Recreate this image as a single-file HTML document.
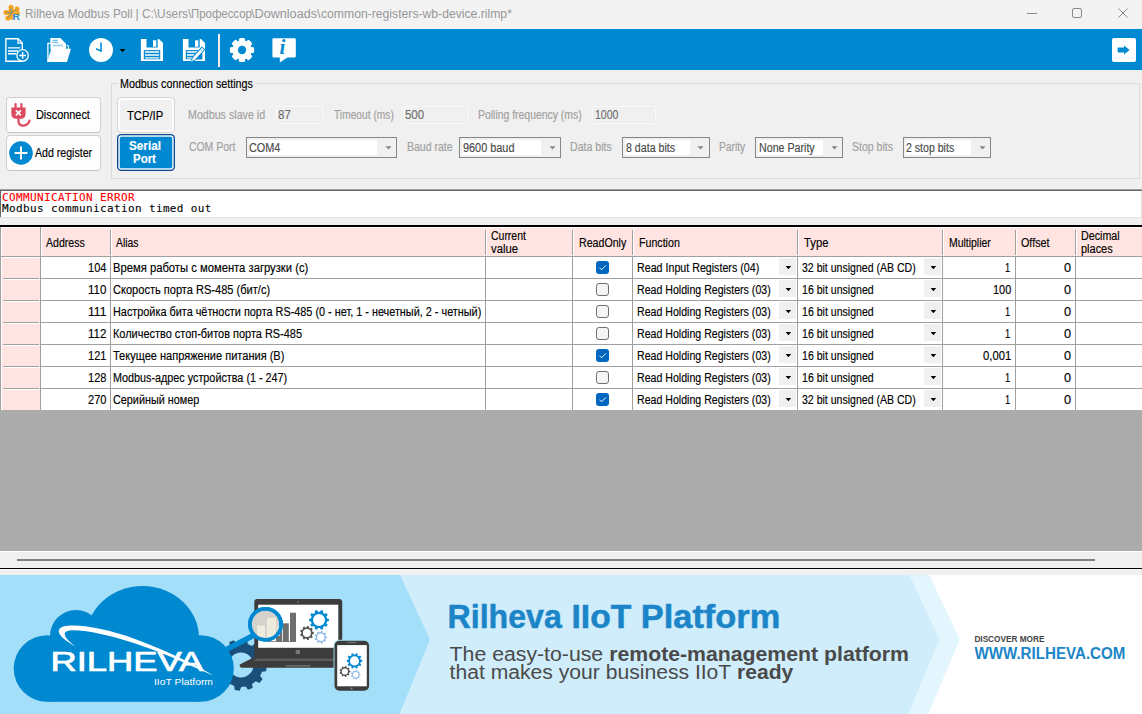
<!DOCTYPE html>
<html lang="en">
<head>
<meta charset="utf-8">
<title>Rilheva Modbus Poll</title>
<style>
*{box-sizing:border-box;margin:0;padding:0}
html,body{width:1142px;height:714px;overflow:hidden;background:#f0f0f0}
body{position:relative;font-family:"Liberation Sans",sans-serif;font-size:12px;color:#000}
.a{position:absolute}
.t{position:absolute;white-space:nowrap;line-height:13px;font-size:12px;transform-origin:0 50%;-webkit-text-stroke:0.15px currentColor}
#title{left:0;top:0;width:1142px;height:29px;background:#f3f3f3}
#tool{left:0;top:29px;width:1142px;height:41px;background:#0088d1}
.btn{background:#fdfdfd;border:1px solid #d0d0d0;border-bottom-color:#c4c4c4;border-radius:4px}
.inp{background:#f0f0f0;border:1px solid #fbfbfb;height:18px;border-radius:2px;box-shadow:inset 0 0 0 1px #ececec}
.combo{background:#f0f0f0;border:1px solid #868686;height:21px;top:137px}
.combo i{position:absolute;left:2px;top:2px;height:15px;background:#fff}
.combo svg{position:absolute;top:8px}
#msg{left:0;top:189px;width:1142px;height:29px;background:#fff;border-top:1px solid #a0a0a0;border-bottom:1px solid #e3e3e3;border-right:1px solid #e3e3e3}
#msg:before{content:"";position:absolute;left:0;top:0;width:1142px;height:1px;background:#696969}
#msg:after{content:"";position:absolute;left:0;top:0;width:1px;height:27px;background:#696969}
.m{position:absolute;left:1.6px;transform-origin:0 50%;transform:scaleX(1.06);white-space:pre;font-family:"DejaVu Sans Mono","Liberation Mono",monospace;font-size:10.4px;line-height:12px;letter-spacing:0.343px;-webkit-text-stroke:0.1px currentColor}
#grid{left:0;top:225px;width:1142px;height:185px;background:#fff;border-top:2px solid #000}
#grid .h{position:absolute;left:2px;top:1px;width:1140px;height:28px;background:#ffe4e1}
.vl{position:absolute;width:1px;background:#a0a0a0}
.hl{position:absolute;height:1px;background:#a0a0a0;left:0}
.rh{position:absolute;left:2px;width:38px;height:22px;background:#ffe4e1}
.rh:before{content:"";position:absolute;left:1px;right:1px;top:0;height:1px;background:#fff}
.rh:after{content:"";position:absolute;left:1px;right:1px;bottom:0;height:1px;background:#a0a0a0}
.dd{position:absolute;width:17px;height:17px;background:#f0f0f0}
.dd:after{content:"";position:absolute;left:6.4px;top:7.8px;width:6px;height:3.5px;background:#000;clip-path:polygon(0 0,100% 0,50% 100%)}
.cb{position:absolute;left:596px;width:13px;height:13px;border-radius:3px}
.cb.on{background:#0067c0}
.cb.off{background:#f5f5f5;border:1px solid #707070}
#gray{left:0;top:410px;width:1142px;height:141px;background:#ababab}
#hs{left:0;top:551px;width:1142px;height:24px;background:#f0f0f0}
#banner{left:0;top:575px;width:1142px;height:139px;background:#fff;overflow:hidden}
</style>
</head>
<body>
<div id="title" class="a">
<svg class="a" style="left:3px;top:4px" width="19" height="18" viewBox="0 0 19 18">
<g fill="#f6a21e"><circle cx="8" cy="3.2" r="2.5"/><circle cx="14" cy="5" r="2.5"/><circle cx="3" cy="8.4" r="2.5"/><circle cx="5" cy="14" r="2.6"/><circle cx="14.6" cy="9.2" r="2.3"/><circle cx="9.4" cy="13.4" r="2.4"/><circle cx="8.6" cy="8.6" r="4.2"/></g>
<g stroke="#3f8fa8" stroke-width="0.7" fill="none"><path d="M8 3.6 8.6 8.8M13.6 5.2 8.6 8.8M3.4 8.4 8.6 8.8M5.2 13.6 8.6 8.8"/></g>
<text x="9.6" y="16.3" font-family="Liberation Sans, sans-serif" font-weight="bold" font-size="8.2" fill="#2a8fd4" textLength="7.4" lengthAdjust="spacingAndGlyphs">R</text>
</svg>
<span class="t" id="t0" style="left:24.9px;top:8.24px;font-size:12.3px;color:#979797;transform:scaleX(0.9598);-webkit-text-stroke:0">Rilheva Modbus Poll</span>
<span class="t" id="t1" style="left:135.4px;top:8.24px;font-size:12.3px;color:#979797;-webkit-text-stroke:0">|</span>
<span class="t" id="t2" style="left:141.6px;top:8.24px;font-size:12.3px;color:#979797;transform:scaleX(0.9620);-webkit-text-stroke:0">C:\Users\</span>
<span class="t" id="t3" style="left:190.7px;top:8.24px;font-size:12.3px;color:#979797;transform:scaleX(0.9284);-webkit-text-stroke:0">Профессор</span>
<span class="t" id="t4" style="left:251.4px;top:8.24px;font-size:12.3px;color:#979797;transform:scaleX(1.0270);-webkit-text-stroke:0">\Downloads\</span>
<span class="t" id="t5" style="left:320.7px;top:8.24px;font-size:12.3px;color:#979797;transform:scaleX(0.9906);-webkit-text-stroke:0">common-registers-wb-device.rilmp*</span>
<svg class="a" style="left:1020px;top:0" width="122" height="29" viewBox="0 0 122 29" fill="none" stroke="#8a8a8a" stroke-width="1">
<path d="M7 13.5H17"/><rect x="52.5" y="8.5" width="9" height="9" rx="1.5"/><path d="M98.5 8.5l9 9M107.5 8.5l-9 9"/></svg>
</div>
<div id="tool" class="a">
  <!-- new -->
  <svg class="a" style="left:4px;top:9px" width="26" height="25" viewBox="0 0 26 25">
    <path d="M1.9 0.7H14L18.3 5V23.3H1.9Z" fill="none" stroke="#fff" stroke-width="1.4"/>
    <path d="M14 0.7V5.1H18.3" fill="none" stroke="#fff" stroke-width="1.2"/>
    <path d="M4 9.9H16.1M4 13H14M4 15.8H12.4" stroke="#fff" stroke-width="1.4"/>
    <circle cx="18.6" cy="17.4" r="5.7" fill="#0088d1" stroke="#fff" stroke-width="1.3"/>
    <path d="M18.6 14v6.8M15.2 17.4h6.8" stroke="#fff" stroke-width="1.5"/>
  </svg>
  <!-- open -->
  <svg class="a" style="left:46px;top:9px" width="26" height="25" viewBox="0 0 26 25">
    <path d="M1.9 24V5.3H5" fill="none" stroke="#fff" stroke-width="1.3"/>
    <path d="M4.4 0H14.4L20.1 6V11H4.4Z" fill="#fff"/>
    <path d="M6.5 2.3H11.8M6.5 4.3H12.2" stroke="#4aa9df" stroke-width="1"/>
    <path d="M7 7.5H17" stroke="#9fd2ee" stroke-width="1.8"/>
    <path d="M20.6 7.6H22.4V11" fill="none" stroke="#fff" stroke-width="1"/>
    <path d="M5.2 10.8H24.9L21 24H1.3Z" fill="#fff"/>
  </svg>
  <!-- clock -->
  <svg class="a" style="left:88px;top:8px" width="40" height="26" viewBox="0 0 40 26">
    <circle cx="13" cy="13" r="12" fill="#fff"/>
    <path d="M13 5.6V14L8 11.8" fill="none" stroke="#0088d1" stroke-width="1.6"/>
    <path d="M31.7 12h5.6l-2.8 3.2z" fill="#000"/>
  </svg>
  <!-- save -->
  <svg class="a" style="left:140px;top:9px" width="24" height="24" viewBox="0 0 24 24">
    <path d="M0.9 0.9H6.5V9.6H17.7V0.9H19L23 5.1V22.9H0.9Z" fill="#fff"/>
    <rect x="13" y="2.3" width="3.3" height="6.4" fill="#fff"/>
    <rect x="3.8" y="12.1" width="16.4" height="9.2" fill="#0088d1"/>
    <path d="M5 14H19.1M5 17.05H19.1" stroke="#fff" stroke-width="1.45"/><path d="M5 19.9H19.1" stroke="#d6ecf8" stroke-width="1.45"/>
  </svg>
  <!-- save as -->
  <svg class="a" style="left:182px;top:9px" width="26" height="25" viewBox="0 0 26 25">
    <path d="M0.9 0.9H6.5V9.6H17.7V0.9H19L23 5.1V22.9H0.9Z" fill="#fff"/>
    <rect x="13" y="2.3" width="3.3" height="6.4" fill="#fff"/>
    <rect x="3.8" y="12.1" width="16.4" height="9.2" fill="#0088d1"/>
    <path d="M5 14H19.1M5 17.05H19.1" stroke="#fff" stroke-width="1.45"/><path d="M5 19.9H19.1" stroke="#d6ecf8" stroke-width="1.45"/>
    <path d="M20.2 13V21.3H12.5Z" fill="#0088d1"/>
    <path d="M8.2 24.2l1.9-5.2 9.6-10.6 3.6 3.2-9.6 10.6z" fill="#0088d1"/>
    <path d="M9.9 22.7l1.1-3.1 8.9-9.8 2.1 1.9-8.9 9.8z" fill="#fff"/>
    <path d="M18.3 11.5l2.1 1.9" stroke="#0088d1" stroke-width="0.7"/>
    <path d="M9 23.7l.8-2.3 1.5 1.4z" fill="#cfe6f5"/>
  </svg>
  <div class="a" style="left:218px;top:5px;width:2px;height:33px;background:#f3ede6"></div>
  <!-- gear -->
  <svg class="a" style="left:229px;top:8px" width="26" height="26" viewBox="-13 -13 26 26">
    <g fill="#fff">
      <circle r="9.7"/>
      <g id="tg"><rect x="-3.1" y="-12.1" width="6.2" height="6" rx="1.6"/></g>
      <use href="#tg" transform="rotate(45)"/><use href="#tg" transform="rotate(90)"/><use href="#tg" transform="rotate(135)"/>
      <use href="#tg" transform="rotate(180)"/><use href="#tg" transform="rotate(225)"/><use href="#tg" transform="rotate(270)"/><use href="#tg" transform="rotate(315)"/>
    </g>
    <circle r="4.2" fill="#0088d1"/>
  </svg>
  <!-- info -->
  <svg class="a" style="left:271px;top:8px" width="26" height="26" viewBox="0 0 26 26">
    <path d="M2.6 1.2H23.6Q24.8 1.2 24.8 2.4V19.2Q24.8 20.4 23.6 20.4H16.4L8.8 25.4V20.4H2.6Q1.4 20.4 1.4 19.2V2.4Q1.4 1.2 2.6 1.2Z" fill="#fff"/>
    <text x="8.6" y="17.4" font-family="Liberation Serif, serif" font-style="italic" font-weight="bold" font-size="21" fill="#0088d1">i</text>
  </svg>
  <!-- arrow button -->
  <div class="a" style="left:1112px;top:9px;width:24px;height:24px;background:#fff;border-radius:2px"></div>
  <svg class="a" style="left:1112px;top:9px" width="24" height="24" viewBox="0 0 24 24">
    <path d="M6.4 9.6H12V7.4L17.6 12 12 16.6V14.4H6.4Q5.6 14.4 5.6 13.6V10.4Q5.6 9.6 6.4 9.6Z" fill="#0088d1"/>
  </svg>
</div>
<div class="a btn" style="left:6px;top:97px;width:95px;height:36px"></div>
<svg class="a" style="left:10px;top:102px" width="22" height="26" viewBox="0 0 22 26">
<g fill="none" stroke="#dc4a5e" stroke-width="2.2" stroke-linecap="round"><path d="M5.6 2.2V6M11.4 2.2V6"/><path d="M8.5 16.6V19.6Q9 23.6 13.4 23.6Q18.4 23.4 19.6 18.6"/></g>
<path d="M1.4 5.6H15.6V11.4Q15.6 16.8 10.8 16.8H6.2Q1.4 16.8 1.4 11.4Z" fill="#dc4a5e"/>
<path d="M5.9 8.3l5 5M10.9 8.3l-5 5" stroke="#fff" stroke-width="1.8"/></svg>
<span class="t" id="t6" style="left:35.7px;top:109.34px;transform:scaleX(0.9078)">Disconnect</span>
<div class="a btn" style="left:6px;top:135px;width:95px;height:36px"></div>
<svg class="a" style="left:9px;top:141px" width="24" height="24" viewBox="0 0 24 24"><circle cx="12" cy="12" r="11.8" fill="#0088d1"/><path d="M12 5.6v12.8M5.6 12h12.8" stroke="#fff" stroke-width="2"/></svg>
<span class="t" id="t7" style="left:35.4px;top:147.34px;transform:scaleX(0.8825)">Add register</span>
<div class="a" style="left:111px;top:83px;width:1029px;height:96px;border:1px solid #dcdcdc"></div>
<div class="a" style="left:118px;top:83px;width:137px;height:1px;background:#f0f0f0"></div>
<span class="t" id="t8" style="left:119.9px;top:78.34px;transform:scaleX(0.8934)">Modbus connection settings</span>
<div class="a" style="left:117px;top:97px;width:58px;height:36px;background:#f0f0f0;border:1px solid #d4d4d4;border-radius:4px;box-shadow:inset 0 0 0 2px #fdfdfd"></div>
<span class="t" id="t9" style="left:126.5px;top:109.84px;transform:scaleX(0.9361)">TCP/IP</span>
<div class="a" style="left:117px;top:134px;width:58px;height:37px;background:#0088d1;border-radius:4.5px;box-shadow:inset 0 0 0 1.3px #0a4a8c,inset 0 0 0 2.8px #eef6fc"></div>
<span class="t" id="t10" style="left:129.0px;top:140.34px;color:#fff;font-weight:bold;transform:scaleX(0.9785)">Serial</span>
<span class="t" id="t11" style="left:133.2px;top:153.34px;color:#fff;font-weight:bold;transform:scaleX(0.9542)">Port</span>
<span class="t" id="t12" style="left:187.6px;top:109.34px;color:#a0a0a0;transform:scaleX(0.8891)">Modbus slave id</span>
<div class="a inp" style="left:276px;top:106px;width:47px"></div>
<span class="t" id="t13" style="left:277.7px;top:109.34px;color:#6d6d6d;transform:scaleX(0.9581)">87</span>
<span class="t" id="t14" style="left:333.6px;top:109.34px;color:#a0a0a0;transform:scaleX(0.8529)">Timeout (ms)</span>
<div class="a inp" style="left:404px;top:106px;width:64px"></div>
<span class="t" id="t15" style="left:405.2px;top:109.34px;color:#6d6d6d;transform:scaleX(0.9535)">500</span>
<span class="t" id="t16" style="left:477.7px;top:109.34px;color:#a0a0a0;transform:scaleX(0.8686)">Polling frequency (ms)</span>
<div class="a inp" style="left:592px;top:106px;width:64px"></div>
<span class="t" id="t17" style="left:594.6px;top:109.34px;color:#6d6d6d;transform:scaleX(0.8726)">1000</span>
<span class="t" id="t18" style="left:189.0px;top:141.34px;color:#a0a0a0;transform:scaleX(0.8680)">COM Port</span>
<div class="a combo" style="left:246px;width:151px"><i style="width:128px"></i><svg style="left:137.6px" width="7" height="4" viewBox="0 0 7 4"><path d="M0.5 0.2h6L3.5 3.5z" fill="#868686"/></svg></div><span class="t" id="t19" style="left:248.8px;top:142.34px;color:#4a4a4a;transform:scaleX(0.9056)">COM4</span>
<span class="t" id="t20" style="left:407.2px;top:141.34px;color:#a0a0a0;transform:scaleX(0.8742)">Baud rate</span>
<div class="a combo" style="left:459px;width:102px"><i style="width:79px"></i><svg style="left:89.1px" width="7" height="4" viewBox="0 0 7 4"><path d="M0.5 0.2h6L3.5 3.5z" fill="#868686"/></svg></div><span class="t" id="t21" style="left:462.5px;top:142.34px;color:#4a4a4a;transform:scaleX(0.9077)">9600 baud</span>
<span class="t" id="t22" style="left:570.1px;top:141.34px;color:#a0a0a0;transform:scaleX(0.8805)">Data bits</span>
<div class="a combo" style="left:622px;width:88px"><i style="width:65px"></i><svg style="left:74.4px" width="7" height="4" viewBox="0 0 7 4"><path d="M0.5 0.2h6L3.5 3.5z" fill="#868686"/></svg></div><span class="t" id="t23" style="left:625.5px;top:142.34px;color:#4a4a4a;transform:scaleX(0.8867)">8 data bits</span>
<span class="t" id="t24" style="left:718.8px;top:141.34px;color:#a0a0a0;transform:scaleX(0.8538)">Parity</span>
<div class="a combo" style="left:755px;width:88px"><i style="width:65px"></i><svg style="left:74.9px" width="7" height="4" viewBox="0 0 7 4"><path d="M0.5 0.2h6L3.5 3.5z" fill="#868686"/></svg></div><span class="t" id="t25" style="left:758.5px;top:142.34px;color:#4a4a4a;transform:scaleX(0.8883)">None Parity</span>
<span class="t" id="t26" style="left:851.7px;top:141.34px;color:#a0a0a0;transform:scaleX(0.8757)">Stop bits</span>
<div class="a combo" style="left:903px;width:88px"><i style="width:65px"></i><svg style="left:74.7px" width="7" height="4" viewBox="0 0 7 4"><path d="M0.5 0.2h6L3.5 3.5z" fill="#868686"/></svg></div><span class="t" id="t27" style="left:906.4px;top:142.34px;color:#4a4a4a;transform:scaleX(0.8811)">2 stop bits</span>
<div id="msg" class="a"><span class="m" style="top:1.4px;color:#f00">COMMUNICATION ERROR</span><span class="m" style="top:12.4px">Modbus communication timed out</span></div>
<div id="grid" class="a">
<div class="a" style="left:0;top:0;width:1px;height:183px;background:#a0a0a0"></div>
<div class="h"></div>
<div class="vl" style="left:40px;top:0;height:29px"></div><div class="vl" style="left:41px;top:1px;height:28px;background:#fff"></div>
<div class="vl" style="left:110px;top:3px;height:25px"></div><div class="vl" style="left:111px;top:3px;height:25px;background:#fff"></div>
<div class="vl" style="left:485px;top:3px;height:25px"></div><div class="vl" style="left:486px;top:3px;height:25px;background:#fff"></div>
<div class="vl" style="left:572px;top:3px;height:25px"></div><div class="vl" style="left:573px;top:3px;height:25px;background:#fff"></div>
<div class="vl" style="left:632px;top:3px;height:25px"></div><div class="vl" style="left:633px;top:3px;height:25px;background:#fff"></div>
<div class="vl" style="left:797px;top:3px;height:25px"></div><div class="vl" style="left:798px;top:3px;height:25px;background:#fff"></div>
<div class="vl" style="left:942px;top:3px;height:25px"></div><div class="vl" style="left:943px;top:3px;height:25px;background:#fff"></div>
<div class="vl" style="left:1015px;top:3px;height:25px"></div><div class="vl" style="left:1016px;top:3px;height:25px;background:#fff"></div>
<div class="vl" style="left:1075px;top:3px;height:25px"></div><div class="vl" style="left:1076px;top:3px;height:25px;background:#fff"></div>
<div class="hl" style="top:29px;width:1142px"></div>
<div class="rh" style="top:30px"></div>
<div class="hl" style="top:51px;left:40px;width:1102px"></div>
<div class="cb on" style="top:34px"><svg width="13" height="13" viewBox="0 0 13 13" style="display:block"><path d="M3.4 6.6l2.2 2.2 4.2-4.4" fill="none" stroke="#fff" stroke-width="0.95"/></svg></div>
<div class="dd" style="left:779px;top:31px"></div><div class="dd" style="left:924px;top:31px"></div>
<div class="rh" style="top:52px"></div>
<div class="hl" style="top:73px;left:40px;width:1102px"></div>
<div class="cb off" style="top:56px"></div>
<div class="dd" style="left:779px;top:53px"></div><div class="dd" style="left:924px;top:53px"></div>
<div class="rh" style="top:74px"></div>
<div class="hl" style="top:95px;left:40px;width:1102px"></div>
<div class="cb off" style="top:78px"></div>
<div class="dd" style="left:779px;top:75px"></div><div class="dd" style="left:924px;top:75px"></div>
<div class="rh" style="top:96px"></div>
<div class="hl" style="top:117px;left:40px;width:1102px"></div>
<div class="cb off" style="top:100px"></div>
<div class="dd" style="left:779px;top:97px"></div><div class="dd" style="left:924px;top:97px"></div>
<div class="rh" style="top:118px"></div>
<div class="hl" style="top:139px;left:40px;width:1102px"></div>
<div class="cb on" style="top:122px"><svg width="13" height="13" viewBox="0 0 13 13" style="display:block"><path d="M3.4 6.6l2.2 2.2 4.2-4.4" fill="none" stroke="#fff" stroke-width="0.95"/></svg></div>
<div class="dd" style="left:779px;top:119px"></div><div class="dd" style="left:924px;top:119px"></div>
<div class="rh" style="top:140px"></div>
<div class="hl" style="top:161px;left:40px;width:1102px"></div>
<div class="cb off" style="top:144px"></div>
<div class="dd" style="left:779px;top:141px"></div><div class="dd" style="left:924px;top:141px"></div>
<div class="rh" style="top:162px"></div>
<div class="hl" style="top:183px;left:40px;width:1102px"></div>
<div class="cb on" style="top:166px"><svg width="13" height="13" viewBox="0 0 13 13" style="display:block"><path d="M3.4 6.6l2.2 2.2 4.2-4.4" fill="none" stroke="#fff" stroke-width="0.95"/></svg></div>
<div class="dd" style="left:779px;top:163px"></div><div class="dd" style="left:924px;top:163px"></div>
<div class="vl" style="left:40px;top:30px;height:154px"></div>
<div class="vl" style="left:110px;top:30px;height:154px"></div>
<div class="vl" style="left:485px;top:30px;height:154px"></div>
<div class="vl" style="left:572px;top:30px;height:154px"></div>
<div class="vl" style="left:632px;top:30px;height:154px"></div>
<div class="vl" style="left:797px;top:30px;height:154px"></div>
<div class="vl" style="left:942px;top:30px;height:154px"></div>
<div class="vl" style="left:1015px;top:30px;height:154px"></div>
<div class="vl" style="left:1075px;top:30px;height:154px"></div>
</div>
<span class="t" id="t28" style="left:46.0px;top:237.34px;transform:scaleX(0.8812)">Address</span>
<span class="t" id="t29" style="left:116.4px;top:237.34px;transform:scaleX(0.8649)">Alias</span>
<span class="t" id="t30" style="left:490.8px;top:230.34px;transform:scaleX(0.8722)">Current</span>
<span class="t" id="t31" style="left:491.0px;top:243.34px;transform:scaleX(0.9412)">value</span>
<span class="t" id="t32" style="left:578.7px;top:237.34px;transform:scaleX(0.8862)">ReadOnly</span>
<span class="t" id="t33" style="left:638.8px;top:237.34px;transform:scaleX(0.8864)">Function</span>
<span class="t" id="t34" style="left:803.5px;top:237.34px;transform:scaleX(0.9379)">Type</span>
<span class="t" id="t35" style="left:948.7px;top:237.34px;transform:scaleX(0.8705)">Multiplier</span>
<span class="t" id="t36" style="left:1020.8px;top:237.34px;transform:scaleX(0.8963)">Offset</span>
<span class="t" id="t37" style="left:1081.1px;top:230.34px;transform:scaleX(0.8906)">Decimal</span>
<span class="t" id="t38" style="left:1081.1px;top:243.34px;transform:scaleX(0.9139)">places</span>
<span class="t" id="t39" style="left:87.9px;top:262.34px;transform:scaleX(0.9186)">104</span>
<span class="t" id="t40" style="left:113.4px;top:262.34px;transform:scaleX(0.9363)">Время работы с момента загрузки (с)</span>
<span class="t" id="t41" style="left:636.9px;top:262.34px;transform:scaleX(0.8893)">Read Input Registers (04)</span>
<span class="t" id="t42" style="left:801.9px;top:262.34px;transform:scaleX(0.8786)">32 bit unsigned (AB CD)</span>
<span class="t" id="t43" style="left:1005.0px;top:262.34px;transform:scaleX(0.7776)">1</span>
<span class="t" id="t44" style="left:1064.3px;top:262.34px;transform:scaleX(1.0617)">0</span>
<span class="t" id="t45" style="left:87.9px;top:284.34px;transform:scaleX(0.9613)">110</span>
<span class="t" id="t46" style="left:113.4px;top:284.34px;transform:scaleX(0.9212)">Скорость порта RS-485 (бит/с)</span>
<span class="t" id="t47" style="left:636.9px;top:284.34px;transform:scaleX(0.8831)">Read Holding Registers (03)</span>
<span class="t" id="t48" style="left:801.9px;top:284.34px;transform:scaleX(0.8808)">16 bit unsigned</span>
<span class="t" id="t49" style="left:993.2px;top:284.34px;transform:scaleX(0.9136)">100</span>
<span class="t" id="t50" style="left:1064.3px;top:284.34px;transform:scaleX(1.0617)">0</span>
<span class="t" id="t51" style="left:87.9px;top:306.34px;transform:scaleX(1.0082)">111</span>
<span class="t" id="t52" style="left:113.4px;top:306.34px;transform:scaleX(0.9052)">Настройка бита чётности порта RS-485 (0 - нет, 1 - нечетный, 2 - четный)</span>
<span class="t" id="t53" style="left:636.9px;top:306.34px;transform:scaleX(0.8831)">Read Holding Registers (03)</span>
<span class="t" id="t54" style="left:801.9px;top:306.34px;transform:scaleX(0.8808)">16 bit unsigned</span>
<span class="t" id="t55" style="left:1005.0px;top:306.34px;transform:scaleX(0.7776)">1</span>
<span class="t" id="t56" style="left:1064.3px;top:306.34px;transform:scaleX(1.0617)">0</span>
<span class="t" id="t57" style="left:87.9px;top:328.34px;transform:scaleX(0.9613)">112</span>
<span class="t" id="t58" style="left:113.4px;top:328.34px;transform:scaleX(0.9119)">Количество стоп-битов порта RS-485</span>
<span class="t" id="t59" style="left:636.9px;top:328.34px;transform:scaleX(0.8831)">Read Holding Registers (03)</span>
<span class="t" id="t60" style="left:801.9px;top:328.34px;transform:scaleX(0.8808)">16 bit unsigned</span>
<span class="t" id="t61" style="left:1005.0px;top:328.34px;transform:scaleX(0.7776)">1</span>
<span class="t" id="t62" style="left:1064.3px;top:328.34px;transform:scaleX(1.0617)">0</span>
<span class="t" id="t63" style="left:87.9px;top:350.34px;transform:scaleX(0.9186)">121</span>
<span class="t" id="t64" style="left:113.4px;top:350.34px;transform:scaleX(0.9195)">Текущее напряжение питания (В)</span>
<span class="t" id="t65" style="left:636.9px;top:350.34px;transform:scaleX(0.8831)">Read Holding Registers (03)</span>
<span class="t" id="t66" style="left:801.9px;top:350.34px;transform:scaleX(0.8808)">16 bit unsigned</span>
<span class="t" id="t67" style="left:983.4px;top:350.34px;transform:scaleX(0.9390)">0,001</span>
<span class="t" id="t68" style="left:1064.3px;top:350.34px;transform:scaleX(1.0617)">0</span>
<span class="t" id="t69" style="left:87.9px;top:372.34px;transform:scaleX(0.9186)">128</span>
<span class="t" id="t70" style="left:113.4px;top:372.34px;transform:scaleX(0.9000)">Modbus-адрес устройства (1 - 247)</span>
<span class="t" id="t71" style="left:636.9px;top:372.34px;transform:scaleX(0.8831)">Read Holding Registers (03)</span>
<span class="t" id="t72" style="left:801.9px;top:372.34px;transform:scaleX(0.8808)">16 bit unsigned</span>
<span class="t" id="t73" style="left:1005.0px;top:372.34px;transform:scaleX(0.7776)">1</span>
<span class="t" id="t74" style="left:1064.3px;top:372.34px;transform:scaleX(1.0617)">0</span>
<span class="t" id="t75" style="left:87.9px;top:394.34px;transform:scaleX(0.9186)">270</span>
<span class="t" id="t76" style="left:113.4px;top:394.34px;transform:scaleX(0.9026)">Серийный номер</span>
<span class="t" id="t77" style="left:636.9px;top:394.34px;transform:scaleX(0.8831)">Read Holding Registers (03)</span>
<span class="t" id="t78" style="left:801.9px;top:394.34px;transform:scaleX(0.8786)">32 bit unsigned (AB CD)</span>
<span class="t" id="t79" style="left:1005.0px;top:394.34px;transform:scaleX(0.7776)">1</span>
<span class="t" id="t80" style="left:1064.3px;top:394.34px;transform:scaleX(1.0617)">0</span>
<div id="gray" class="a"></div>
<div id="hs" class="a"><div class="a" style="left:0;top:0;width:1142px;height:1px;background:#fff"></div>
<div class="a" style="left:17px;top:8px;width:1078px;height:2px;background:#7f7f7f"></div>
<div class="a" style="left:0;top:17px;width:1142px;height:1px;background:#000"></div>
<div class="a" style="left:0;top:18px;width:1142px;height:1px;background:#fafafa"></div></div>
<div id="banner" class="a">
<svg width="1142" height="139" viewBox="0 575 1142 139" style="display:block">
<rect x="0" y="575" width="1142" height="139" fill="#fff"/>
<path d="M0 575H929.3L959.8 639.6 928.3 714H0Z" fill="#e3f5fd"/>
<path d="M0 575H909.4L939.4 639.6 908.3 714H0Z" fill="#d0edfb"/>
<path d="M0 575H400L430 639.6 399.5 714H0Z" fill="#a3dff8"/>
<path d="M266.8 666.3 L266.0 671.3 L262.0 671.7 L260.1 675.9 L262.6 679.0 L259.5 683.0 L255.8 681.2 L252.1 684.0 L252.7 688.0 L248.0 689.8 L245.7 686.5 L241.2 687.0 L239.7 690.8 L234.7 690.0 L234.3 686.0 L230.1 684.1 L227.0 686.6 L223.0 683.5 L224.8 679.8 L222.0 676.1 L218.0 676.7 L216.2 672.0 L219.5 669.7 L219.0 665.2 L215.2 663.7 L216.0 658.7 L220.0 658.3 L221.9 654.1 L219.4 651.0 L222.5 647.0 L226.2 648.8 L229.9 646.0 L229.3 642.0 L234.0 640.2 L236.3 643.5 L240.8 643.0 L242.3 639.2 L247.3 640.0 L247.7 644.0 L251.9 645.9 L255.0 643.4 L259.0 646.5 L257.2 650.2 L260.0 653.9 L264.0 653.3 L265.8 658.0 L262.5 660.3 L263.0 664.8Z M228.5 665.0 a12.5 12.5 0 1 0 25.0 0 a12.5 12.5 0 1 0 -25.0 0Z" fill="#1a4f7a" fill-rule="evenodd"/>
<g fill="#0088d1"><circle cx="47" cy="668.5" r="33.3"/><circle cx="76" cy="636" r="26"/><ellipse cx="142.5" cy="638" rx="56.5" ry="52"/><circle cx="200.5" cy="668.5" r="33.3"/><rect x="47" y="640" width="153" height="61.8"/></g>
<path d="M76 647 C66 641 56 634 59.5 629 C64 622 100 626 135 639 C170 652 200 667 213 675.5 C196 668 165 653 132 642.5 C100 632 70 627.5 65.5 632 C62.5 635 68 641 76 647Z" fill="#fff"/>
<text x="50.4" y="670.7" font-family="Liberation Sans, sans-serif" font-size="27" fill="#fff" stroke="#fff" stroke-width="0.7" textLength="153" lengthAdjust="spacingAndGlyphs">RILHEVA</text>
<text x="154" y="685" font-family="Liberation Sans, sans-serif" font-size="9.6" fill="#fff" textLength="59" lengthAdjust="spacingAndGlyphs">IIoT Platform</text>
<path d="M254.3 657 L239.8 664.6 Q239.2 667.8 243 667.8 H345 V657Z" fill="#3c3c3c"/>
<path d="M257 658.6H340L342 661H253Z" fill="#5a5a5a"/>
<rect x="285.7" y="665" width="24.5" height="1.6" fill="#6c6c6c"/>
<rect x="254.3" y="598.9" width="87.9" height="58.4" rx="3" fill="#3c3c3c"/>
<rect x="258.2" y="604.7" width="80.1" height="43.1" fill="#fff"/>
<circle cx="297.9" cy="602" r="0.8" fill="#888"/>
<rect x="295.7" y="650" width="4.3" height="4" fill="#777"/>
<g fill="#6e6e6e"><rect x="290" y="612.7" width="6" height="29"/><rect x="282.8" y="623.3" width="6" height="18.4"/><rect x="276" y="626" width="6" height="15.7"/><rect x="268" y="641" width="28" height="0.8"/></g>
<path d="M328.9 618.7 L328.9 621.1 L327.1 621.4 L326.4 623.4 L327.7 624.8 L326.3 626.7 L324.6 625.9 L323.0 627.1 L323.2 629.0 L321.0 629.7 L320.0 628.0 L318.0 628.0 L317.0 629.7 L314.8 629.0 L315.0 627.1 L313.4 625.9 L311.7 626.7 L310.3 624.8 L311.6 623.4 L310.9 621.4 L309.1 621.1 L309.1 618.7 L310.9 618.4 L311.6 616.4 L310.3 615.0 L311.7 613.1 L313.4 613.9 L315.0 612.7 L314.8 610.8 L317.0 610.1 L318.0 611.8 L320.0 611.8 L321.0 610.1 L323.2 610.8 L323.0 612.7 L324.6 613.9 L326.3 613.1 L327.7 615.0 L326.4 616.4 L327.1 618.4Z M313.0 619.9 a6 6 0 1 0 12.0 0 a6 6 0 1 0 -12.0 0Z" fill="#0088d1" fill-rule="evenodd"/>
<path d="M313.8 632.1 L313.8 633.9 L312.5 634.2 L311.9 635.7 L312.8 636.8 L311.6 638.2 L310.4 637.5 L309.0 638.3 L309.0 639.7 L307.2 640.0 L306.7 638.7 L305.1 638.4 L304.2 639.5 L302.6 638.6 L303.1 637.2 L302.1 636.0 L300.7 636.2 L300.1 634.5 L301.3 633.8 L301.3 632.2 L300.1 631.5 L300.7 629.8 L302.1 630.0 L303.1 628.8 L302.6 627.4 L304.2 626.5 L305.1 627.6 L306.7 627.3 L307.2 626.0 L309.0 626.3 L309.0 627.7 L310.4 628.5 L311.6 627.8 L312.8 629.2 L311.9 630.3 L312.5 631.8Z M302.9 633.0 a4 4 0 1 0 8.0 0 a4 4 0 1 0 -8.0 0Z" fill="#555" fill-rule="evenodd"/>
<path d="M327.0 636.4 L327.0 638.0 L325.7 638.2 L325.2 639.5 L326.1 640.6 L325.1 641.8 L323.9 641.1 L322.7 641.8 L322.7 643.2 L321.1 643.5 L320.6 642.2 L319.3 642.0 L318.4 643.0 L317.0 642.2 L317.5 640.9 L316.6 639.8 L315.2 640.1 L314.6 638.6 L315.8 637.9 L315.8 636.5 L314.6 635.8 L315.2 634.3 L316.6 634.6 L317.5 633.5 L317.0 632.2 L318.4 631.4 L319.3 632.4 L320.6 632.2 L321.1 630.9 L322.7 631.2 L322.7 632.6 L323.9 633.3 L325.1 632.6 L326.1 633.8 L325.2 634.9 L325.7 636.2Z M317.1 637.2 a3.7 3.7 0 1 0 7.4 0 a3.7 3.7 0 1 0 -7.4 0Z" fill="#8db8e8" fill-rule="evenodd"/>
<path d="M251.5 636.5L228 648.6" stroke="#0088d1" stroke-width="5.4" stroke-linecap="round"/>
<circle cx="265.5" cy="624.3" r="15.6" fill="#d4d2cc" stroke="#0088d1" stroke-width="3.6"/>
<g fill="#eeebdc"><rect x="257" y="625.5" width="8" height="12"/><rect x="267" y="618" width="9" height="20.5"/><rect x="277.2" y="626" width="2.6" height="10"/></g>
<circle cx="265.5" cy="624.3" r="15.6" fill="none" stroke="#0088d1" stroke-width="3.6"/>
<rect x="333.6" y="639.8" width="36.4" height="51.9" rx="6" fill="#a3dff8"/>
<rect x="334.5" y="640.7" width="34.6" height="50.1" rx="5" fill="#3c3c3c"/>
<rect x="337.2" y="645.1" width="29.6" height="41.2" fill="#fff"/>
<rect x="347.4" y="641.9" width="9" height="0.9" fill="#888"/>
<circle cx="351.6" cy="688.4" r="1" fill="#888"/>
<path d="M362.2 660.0 L362.2 661.8 L360.7 662.1 L360.2 663.6 L361.3 664.7 L360.2 666.2 L358.8 665.5 L357.5 666.4 L357.8 668.0 L356.0 668.6 L355.3 667.2 L353.7 667.2 L353.0 668.6 L351.2 668.0 L351.5 666.4 L350.2 665.5 L348.8 666.2 L347.7 664.7 L348.8 663.6 L348.3 662.1 L346.8 661.8 L346.8 660.0 L348.3 659.7 L348.8 658.2 L347.7 657.1 L348.8 655.6 L350.2 656.3 L351.5 655.4 L351.2 653.8 L353.0 653.2 L353.7 654.6 L355.3 654.6 L356.0 653.2 L357.8 653.8 L357.5 655.4 L358.8 656.3 L360.2 655.6 L361.3 657.1 L360.2 658.2 L360.7 659.7Z M349.9 660.9 a4.6 4.6 0 1 0 9.2 0 a4.6 4.6 0 1 0 -9.2 0Z" fill="#0088d1" fill-rule="evenodd"/>
<path d="M350.4 670.8 L350.4 672.2 L349.2 672.4 L348.8 673.6 L349.5 674.5 L348.6 675.6 L347.6 675.0 L346.5 675.6 L346.6 676.7 L345.1 677.0 L344.7 675.9 L343.5 675.7 L342.8 676.6 L341.6 675.9 L342.0 674.8 L341.2 673.8 L340.0 674.0 L339.5 672.7 L340.5 672.1 L340.5 670.9 L339.5 670.3 L340.0 669.0 L341.2 669.2 L342.0 668.2 L341.6 667.1 L342.8 666.4 L343.5 667.3 L344.7 667.1 L345.1 666.0 L346.6 666.3 L346.5 667.4 L347.6 668.0 L348.6 667.4 L349.5 668.5 L348.8 669.4 L349.2 670.6Z M341.8 671.5 a3.1 3.1 0 1 0 6.2 0 a3.1 3.1 0 1 0 -6.2 0Z" fill="#555" fill-rule="evenodd"/>
<path d="M360.5 674.2 L360.5 675.4 L359.4 675.6 L359.1 676.6 L359.7 677.4 L358.9 678.3 L358.0 677.8 L357.1 678.3 L357.1 679.4 L355.9 679.6 L355.6 678.6 L354.5 678.4 L353.9 679.2 L352.8 678.6 L353.2 677.6 L352.5 676.8 L351.4 677.0 L351.0 675.8 L351.9 675.3 L351.9 674.3 L351.0 673.8 L351.4 672.6 L352.5 672.8 L353.2 672.0 L352.8 671.0 L353.9 670.4 L354.5 671.2 L355.6 671.0 L355.9 670.0 L357.1 670.2 L357.1 671.3 L358.0 671.8 L358.9 671.3 L359.7 672.2 L359.1 673.0 L359.4 674.0Z M352.9 674.8 a2.8 2.8 0 1 0 5.6 0 a2.8 2.8 0 1 0 -5.6 0Z" fill="#8db8e8" fill-rule="evenodd"/>
<text y="627.6" font-family="Liberation Sans, sans-serif" font-weight="bold" font-size="33.8" fill="#1b85c8" stroke="#1b85c8" stroke-width="0.5"><tspan x="447.6" textLength="114.2" lengthAdjust="spacingAndGlyphs">Rilheva</tspan> <tspan x="571.5" textLength="59.8" lengthAdjust="spacingAndGlyphs">IIoT</tspan> <tspan x="640.8" textLength="139.5" lengthAdjust="spacingAndGlyphs">Platform</tspan></text>
<text y="660.6" font-family="Liberation Sans, sans-serif" font-size="20" fill="#4a4a4a"><tspan x="449.6" textLength="153.6" lengthAdjust="spacingAndGlyphs">The easy-to-use</tspan> <tspan x="609.2" textLength="299.8" lengthAdjust="spacingAndGlyphs" font-weight="bold">remote-management platform</tspan></text>
<text y="678.7" font-family="Liberation Sans, sans-serif" font-size="20" fill="#4a4a4a"><tspan x="449.6" textLength="281.3" lengthAdjust="spacingAndGlyphs">that makes your business IIoT</tspan> <tspan x="737" textLength="56.3" lengthAdjust="spacingAndGlyphs" font-weight="bold">ready</tspan></text>
<text x="974.4" y="641.9" font-family="Liberation Sans, sans-serif" font-weight="bold" font-size="9" fill="#444" textLength="70" lengthAdjust="spacingAndGlyphs">DISCOVER MORE</text>
<text x="974.4" y="658.6" font-family="Liberation Sans, sans-serif" font-weight="bold" font-size="16" fill="#1b85c8" textLength="151" lengthAdjust="spacingAndGlyphs">WWW.RILHEVA.COM</text>
</svg>
</div>
</body>
</html>
